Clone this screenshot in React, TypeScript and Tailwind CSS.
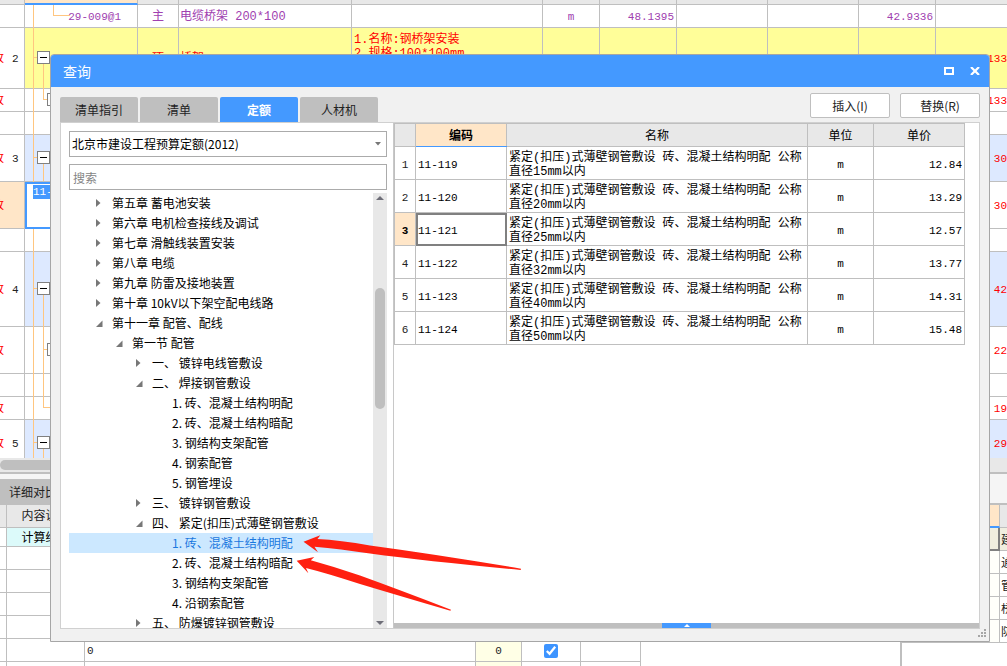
const sheetRows = [
  { h: 'h-[23px]', code: '29-009@1', kind: '主', name: '电缆桥架 200*100', unit: 'm', qty: '48.1395', price: '42.9336' },
  { h: 'h-[61px]', tone: 'bg-[#fffe99]', no: '2', mark: true, kind: '项', name: '桥架', spec: '1.名称:钢桥架安装\n2.规格:100*100mm', total: '133' },
  { h: 'h-[23px]', mark: true, total: '133' },
  { h: 'h-[23px]' },
  { h: 'h-[47px]', tone: 'bg-[#dde9ff]', no: '3', mark: true, total: '30' },
  { h: 'h-[47px]', mark: true, selected: true, code: '11-', total: '30' },
  { h: 'h-[23px]' },
  { h: 'h-[75px]', tone: 'bg-[#dde9ff]', no: '4', mark: true, total: '42' },
  { h: 'h-[47px]', mark: true, total: '22' },
  { h: 'h-[23px]' },
  { h: 'h-[23px]', mark: true, total: '19' },
  { h: 'h-[47px]', tone: 'bg-[#dde9ff]', no: '5', mark: true, total: '29' },
];

const tree = [
  { level: 0, label: '第五章 蓄电池安装', state: 'closed' },
  { level: 0, label: '第六章 电机检查接线及调试', state: 'closed' },
  { level: 0, label: '第七章 滑触线装置安装', state: 'closed' },
  { level: 0, label: '第八章 电缆', state: 'closed' },
  { level: 0, label: '第九章 防雷及接地装置', state: 'closed' },
  { level: 0, label: '第十章 10kV以下架空配电线路', state: 'closed' },
  { level: 0, label: '第十一章 配管、配线', state: 'open' },
  { level: 1, label: '第一节 配管', state: 'open' },
  { level: 2, label: '一、 镀锌电线管敷设', state: 'closed' },
  { level: 2, label: '二、 焊接钢管敷设', state: 'open' },
  { level: 3, label: '1. 砖、混凝土结构明配' },
  { level: 3, label: '2. 砖、混凝土结构暗配' },
  { level: 3, label: '3. 钢结构支架配管' },
  { level: 3, label: '4. 钢索配管' },
  { level: 3, label: '5. 钢管埋设' },
  { level: 2, label: '三、 镀锌钢管敷设', state: 'closed' },
  { level: 2, label: '四、 紧定(扣压)式薄壁钢管敷设', state: 'open' },
  { level: 3, label: '1. 砖、混凝土结构明配', active: true },
  { level: 3, label: '2. 砖、混凝土结构暗配' },
  { level: 3, label: '3. 钢结构支架配管' },
  { level: 3, label: '4. 沿钢索配管' },
  { level: 2, label: '五、 防爆镀锌钢管敷设', state: 'closed' },
];

const indents = ['pl-[23px]', 'pl-[43px]', 'pl-[63px]', 'pl-[83px]'];

const quotas = [
  { code: '11-119', size: '15', price: '12.84' },
  { code: '11-120', size: '20', price: '13.29' },
  { code: '11-121', size: '25', price: '12.57' },
  { code: '11-122', size: '32', price: '13.77' },
  { code: '11-123', size: '40', price: '14.31' },
  { code: '11-124', size: '50', price: '15.48' },
];

const tabs = ['清单指引', '清单', '定额', '人材机'];

// connector lines and expand boxes of the sheet behind the dialog
function SheetTree() {
  return (
    <svg className="absolute left-0 top-0 pointer-events-none" width="80" height="458" viewBox="0 0 80 458" fill="none" shapeRendering="crispEdges">
      <g stroke="#ffc680">
        <path d="M33.5 5V182M33.5 229V458M53.5 5V15.5H70" />
        <path d="M34 57.5H37M43.5 64V99.5H47M34 157.5H37M43.5 164V181M34 288.5H37M43.5 295V407.5H52M44 349.5H47M34 442.5H37M43.5 449V458" />
      </g>
      <g fill="#fff" stroke="#808080">
        {[57, 157, 288, 442].map((y) => (
          <rect key={y} x="37.5" y={y - 5.5} width="12" height="12" />
        ))}
        <rect x="47.5" y="93.5" width="12" height="12" />
        <rect x="47.5" y="343.5" width="12" height="12" />
      </g>
      <path d="M40 57.5h7M40 157.5h7M40 288.5h7M40 442.5h7" stroke="#000" />
    </svg>
  );
}

function Sheet() {
  return (
    <div className="relative h-[458px] shrink-0 overflow-hidden">
      <table className="w-full table-fixed border-separate border-spacing-0 text-[12px] leading-[14px] [&_td]:border-b [&_td]:border-r [&_td]:border-[#bfbfbf] [&_td]:p-0 [&_td:last-child]:border-r-0">
        <colgroup>
          <col className="w-[25px]" />
          <col className="w-[113px]" />
          <col className="w-[41px]" />
          <col className="w-[173px]" />
          <col className="w-[191px]" />
          <col className="w-[57px]" />
          <col className="w-[77px]" />
          <col className="w-[91px]" />
          <col className="w-[91px]" />
          <col className="w-[77px]" />
          <col />
        </colgroup>
        <tbody>
          <tr className="h-[5px] bg-[#e8e8e8]">
            <td />
            <td className="border-b-2! border-b-[#4499ff]! bg-[#ffe6c8]" />
            {[0, 1, 2, 3, 4, 5, 6, 7, 8].map((i) => <td key={i} />)}
          </tr>
          {sheetRows.map((row, i) => (
            <tr key={i} className={`${row.h} ${row.tone ?? 'bg-white'} ${i === 0 ? 'text-[#a040b0]' : 'text-[#ff0000]'} [&>td]:pt-0.5!`}>
              <td className={row.selected ? 'bg-[#ffe6c8]' : 'bg-white'}>
                <div className="flex w-6 gap-2 overflow-hidden">
                  {row.mark && <span className="-ml-2">改</span>}
                  <span className="text-[11px] text-[#222]">{row.no}</span>
                </div>
              </td>
              <td className={row.selected ? 'align-top outline-2 -outline-offset-2 outline-[#4499ff]' : 'pr-4! text-right text-[11px]'}>
                {row.selected
                  ? <span className="ml-2 mt-px inline-block bg-[#4499ff] text-[11px] text-white">{row.code}</span>
                  : row.code}
              </td>
              <td className="text-center">{row.kind}</td>
              <td className="pl-px!">{row.name}</td>
              <td className="align-top">
                {row.spec && <div className="h-[54px] overflow-hidden whitespace-pre pl-0.5 pt-[3px]">{row.spec}</div>}
              </td>
              <td className="text-center text-[11px]">{row.unit}</td>
              <td className="pr-0.5! text-right text-[11px]">{row.qty}</td>
              <td />
              <td />
              <td className="pr-0.5! text-right text-[11px]">{row.price}</td>
              <td className="text-right text-[11px]">{row.total}</td>
            </tr>
          ))}
        </tbody>
      </table>
      <SheetTree />
    </div>
  );
}

function DetailPane() {
  return (
    <div className="flex min-h-0 flex-1 border-t-2 border-[#bfbfbf] bg-white text-[12px] leading-[14px] text-[#222]">
      <div className="min-w-0 flex-1 overflow-hidden">
        <div className="flex bg-[#f5f5f5] pt-[5px]">
          <button className="h-[26px] w-[78px] bg-[#bfbfbf] pl-[9px] text-left font-['Noto_Sans_CJK_SC',sans-serif]">详细对比</button>
        </div>
        <table className="w-full table-fixed border-separate border-spacing-0 [&_td]:border-b [&_td]:border-r [&_td]:border-[#bfbfbf] [&_td]:p-0 [&_td]:pt-0.5">
          <colgroup>
            <col className="w-[7px]" />
            <col className="w-[78px]" />
            <col className="w-[391px]" />
            <col className="w-[46px]" />
            <col className="w-[59px]" />
            <col className="w-[60px]" />
            <col />
          </colgroup>
          <tbody>
            <tr className="h-[23px] bg-[#e8e8e8] text-center">
              <td /><td>内容说明</td><td /><td /><td /><td /><td />
            </tr>
            <tr className="h-[19px] bg-[#dcfafa] text-center text-black [&>td]:pt-1!">
              <td className="bg-white" /><td>计算结果</td><td /><td /><td /><td /><td />
            </tr>
            {[0, 1, 2, 3, 4, 5].map((i) => (
              <tr key={i} className="h-[23px]">
                <td />
                <td />
                <td className="pl-0.5! text-[11px]">{i === 4 && '0'}</td>
                <td className="bg-[#ffffe6] text-center text-[11px]">{i === 4 && '0'}</td>
                <td className="text-center">
                  {i === 4 && (
                    <input type="checkbox" defaultChecked aria-label="输出" className="mx-auto block size-3.5 accent-[#3d94ff]" />
                  )}
                </td>
                <td />
                <td className="border-b-0! border-r-0!" />
              </tr>
            ))}
          </tbody>
        </table>
      </div>
      <div className="w-[107px] shrink-0 border-l-2 border-[#bfbfbf]">
        <div className="h-[31px] border-b-2 border-[#bfbfbf] bg-[#f5f5f5]" />
        <table className="w-full table-fixed border-separate border-spacing-0 [&_td]:border-b [&_td]:border-[#bfbfbf] [&_td]:p-0 [&_td]:pt-1">
          <colgroup>
            <col />
            <col className="w-[7px]" />
          </colgroup>
          <tbody>
            <tr className="h-[23px]">
              <td className="border-b-2! border-r border-b-[#4499ff]! bg-[#ffe6c8]" />
              <td className="bg-[#e8e8e8]" />
            </tr>
            {['建', '通', '管', '桥', '防'].map((t, i) => (
              <tr key={t} className={`h-[23px] ${i === 0 ? 'bg-[#f0eedf]' : ''}`}>
                <td className={i === 0 ? 'border-r border-[#808080]! shadow-[inset_-1px_-1px_0_#808080]' : 'border-r bg-[#fffffa]'} />
                <td><div className="w-[7px] overflow-hidden whitespace-nowrap pl-px">{t}</div></td>
              </tr>
            ))}
          </tbody>
        </table>
      </div>
    </div>
  );
}

function CatalogPanel() {
  return (
    <div className="flex w-[333px] shrink-0 flex-col border-r border-[#c8c8c8] bg-white pl-2 pr-1.5 pt-2">
      <div className="relative">
        <select aria-label="定额库" className="block h-[26px] w-full appearance-none border border-[#ababab] bg-white pl-0.5 pr-5 text-[12px] text-black">
          <option>北京市建设工程预算定额(2012)</option>
        </select>
        <svg className="pointer-events-none absolute right-[6px] top-[11px]" width="6" height="4" viewBox="0 0 6 4" fill="#777">
          <path d="M0 0H6L3 3.5Z" />
        </svg>
      </div>
      <input aria-label="搜索" placeholder="搜索" className="mt-[7px] block h-[26px] w-full border border-[#ababab] px-[3px] text-[12px] placeholder:text-[#858585]" />
      <div className="mt-[3px] flex min-h-0 flex-1">
        <ul role="tree" className="min-w-0 flex-1 overflow-hidden">
          {tree.map((node, i) => (
            <li
              key={i}
              role="treeitem"
              aria-expanded={node.state ? node.state === 'open' : undefined}
              aria-selected={!!node.active}
              className={`flex h-5 items-center whitespace-nowrap text-[12px] leading-5 ${indents[node.level]} ${node.active ? 'bg-[#cce8ff] text-[#1a78e0]' : 'text-black'}`}
            >
              <span className="w-5 shrink-0 pl-1">
                {node.state === 'closed' && (
                  <svg width="5" height="8" viewBox="0 0 5 8" fill="#777"><path d="M0 0L4.500 4L0 8Z" /></svg>
                )}
                {node.state === 'open' && (
                  <svg width="7" height="7" viewBox="0 0 7 7" fill="#777"><path d="M6.500 .5V7H0Z" /></svg>
                )}
              </span>
              {node.label}
            </li>
          ))}
        </ul>
        <div className="flex w-3.5 flex-col items-center bg-[#e8e8e8] pb-[3px] pt-[3px]">
          <svg width="8" height="4" viewBox="0 0 8 4" fill="#6e6e78"><path d="M0 4L4 0L8 4Z" /></svg>
          <div className="mt-[88px] h-[121px] w-2.5 rounded-full bg-[#bfbfbf]" />
          <svg className="mt-auto" width="8" height="4" viewBox="0 0 8 4" fill="#6e6e78"><path d="M0 0L4 4L8 0Z" /></svg>
        </div>
      </div>
    </div>
  );
}

function QuotaPanel() {
  return (
    <div className="flex min-w-0 flex-1 flex-col bg-white">
      <div className="min-h-0 flex-1 overflow-hidden">
        <table className="w-[571px] table-fixed border-collapse font-['Liberation_Mono','Noto_Sans_CJK_SC',monospace] text-[12px] leading-[14px] text-black [&_td]:border [&_td]:border-[#bfbfbf] [&_td]:py-0 [&_td]:pt-[3px] [&_th]:border [&_th]:border-[#bfbfbf] [&_th]:p-0 [&_th]:pt-[3px]">
          <colgroup>
            <col className="w-[21px]" />
            <col className="w-[91px]" />
            <col className="w-[301px]" />
            <col className="w-[66px]" />
            <col className="w-[91px]" />
          </colgroup>
          <thead>
            <tr className="h-[23px] bg-[#e8e8e8]">
              <th />
              <th className="border-b-[#4499ff]! bg-[#ffe6c8] font-bold">编码</th>
              <th className="font-normal">名称</th>
              <th className="font-normal">单位</th>
              <th className="font-normal">单价</th>
            </tr>
          </thead>
          <tbody>
            {quotas.map((q, i) => {
              const current = i === 2;
              return (
                <tr key={q.code} className="h-[33px]">
                  <td className={`px-0 text-center text-[11px] ${current ? 'bg-[#ffe6c8] font-bold' : 'text-[#222]'}`}>{i + 1}</td>
                  <td className={`px-0.5 text-[11px] ${current ? 'outline-2 -outline-offset-2 outline-[#808080]' : ''}`}>{q.code}</td>
                  <td className="px-0.5">紧定(扣压)式薄壁钢管敷设 砖、混凝土结构明配 公称直径{q.size}mm以内</td>
                  <td className="px-0 text-center text-[11px]">m</td>
                  <td className="pl-0 pr-0.5 text-right text-[11px]">{q.price}</td>
                </tr>
              );
            })}
          </tbody>
        </table>
      </div>
      <div className="flex h-[5px] justify-center bg-[#bfbfbf]">
        <button aria-label="展开" className="flex w-[49px] items-center justify-center bg-[#4499ff]">
          <svg width="6" height="3" viewBox="0 0 6 3" fill="#fff"><path d="M0 3L3 0L6 3Z" /></svg>
        </button>
      </div>
    </div>
  );
}

function QueryDialog() {
  return (
    <div role="dialog" aria-label="查询" className="absolute bottom-6 left-[50px] right-[17px] top-[54px] flex flex-col rounded-t border border-[#a6a6a6] bg-[#f1f1f1] font-['Noto_Sans_CJK_SC',sans-serif]">
      <div className="flex h-8 shrink-0 items-center rounded-t-[3px] bg-[#4499ff] pl-3 pr-[9px] text-white">
        <h1 className="flex-1 text-[14px]">查询</h1>
        <button aria-label="最大化" className="mr-4">
          <svg width="10" height="8" viewBox="0 0 10 8" fill="none" stroke="#fff" strokeWidth="2"><path d="M1 1H9V7H1Z" /></svg>
        </button>
        <button aria-label="关闭">
          <svg width="10" height="8" viewBox="0 0 10 8" fill="none" stroke="#fff" strokeWidth="2.200"><path d="M1 0L9 8M9 0L1 8" /></svg>
        </button>
      </div>
      <div className="flex h-[35px] shrink-0 justify-between px-[9px] text-[12px] text-[#222]">
        <div role="tablist" className="flex items-end gap-0.5">
          {tabs.map((tab) => (
            <button
              key={tab}
              role="tab"
              aria-selected={tab === '定额'}
              className={`h-[25px] w-[78px] rounded-t-xs ${tab === '定额' ? 'bg-[#4499ff] font-bold text-white' : 'bg-[#bfbfbf]'}`}
            >
              {tab}
            </button>
          ))}
        </div>
        <div className="flex gap-2.5 pt-1.5">
          <button className="h-[25px] w-20 rounded-xs border border-[#bfbfbf] bg-white">插入(I)</button>
          <button className="h-[25px] w-20 rounded-xs border border-[#bfbfbf] bg-white">替换(R)</button>
        </div>
      </div>
      <div className="mx-[9px] flex min-h-0 flex-1 border border-[#d0d0d0]">
        <CatalogPanel />
        <QuotaPanel />
      </div>
      <div className="flex h-3 shrink-0 justify-end pr-[3px]">
        <svg width="8" height="8" viewBox="0 0 8 8" fill="#a6a6a6">
          <path d="M6 0h2v2h-2zM3 3h2v2h-2zM6 3h2v2h-2zM0 6h2v2h-2zM3 6h2v2h-2zM6 6h2v2h-2z" />
        </svg>
      </div>
      {/* red pointers at the two 砖、混凝土 entries */}
      <svg className="pointer-events-none absolute left-[245px] top-[480px]" width="226" height="76" viewBox="296 535 226 76" fill="#ff2010">
        <path d="M303.500 541.700L320.300 535.200L317.500 539Q340 540 370 545.500Q440 555 521 568.700L520.700 570Q430 561.500 370 553.500Q340 549 314.500 546.700L318 552.200Z" />
        <path d="M296.700 560.700L314.300 557L310.800 560.300Q335 567 360 575.500Q400 590 451 609.700L450.400 610.800Q400 596 360 584Q330 574 306 567.900L308.400 573.200Z" />
      </svg>
    </div>
  );
}

export default function App() {
  return (
    <main className="relative flex h-screen flex-col overflow-hidden bg-white font-['Liberation_Mono','Noto_Sans_CJK_SC',monospace]">
      <Sheet />
      <div className="h-3.5 shrink-0 bg-[#e8e8e8] pt-0.5">
        <div className="h-2.5 w-3/5 rounded-full bg-[#bfbfbf]" />
      </div>
      <DetailPane />
      <QueryDialog />
    </main>
  );
}
